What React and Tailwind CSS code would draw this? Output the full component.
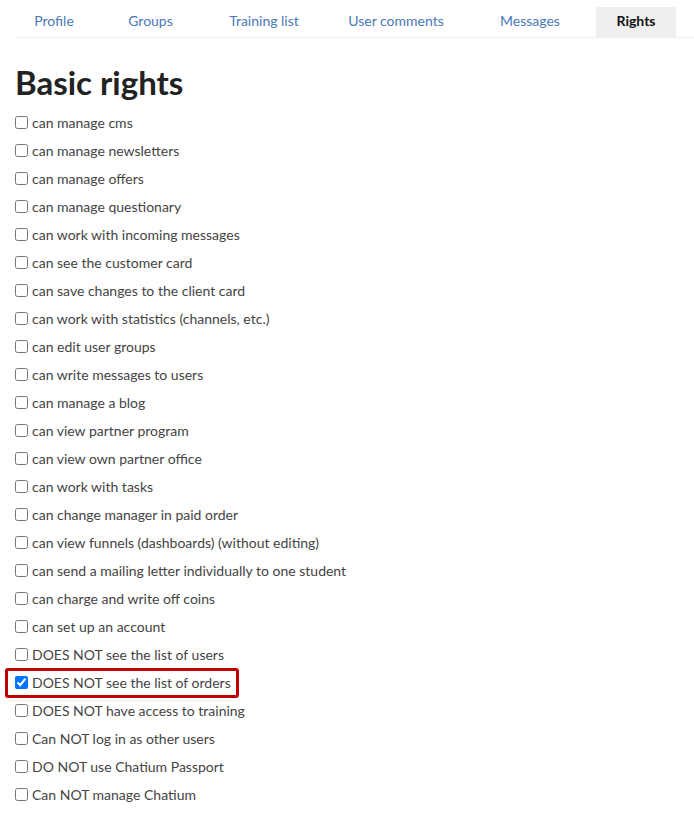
import { useState } from "react";

const tabs = ["Profile", "Groups", "Training list", "User comments", "Messages", "Rights"];

const rights = [
  "can manage cms",
  "can manage newsletters",
  "can manage offers",
  "can manage questionary",
  "can work with incoming messages",
  "can see the customer card",
  "can save changes to the client card",
  "can work with statistics (channels, etc.)",
  "can edit user groups",
  "can write messages to users",
  "can manage a blog",
  "can view partner program",
  "can view own partner office",
  "can work with tasks",
  "can change manager in paid order",
  "can view funnels (dashboards) (without editing)",
  "can send a mailing letter individually to one student",
  "can charge and write off coins",
  "can set up an account",
  "DOES NOT see the list of users",
  "DOES NOT see the list of orders",
  "DOES NOT have access to training",
  "Can NOT log in as other users",
  "DO NOT use Chatium Passport",
  "Can NOT manage Chatium",
];

export default function App() {
  const [checked, setChecked] = useState({ 20: true });

  return (
    <div className="min-h-[814px] bg-white pl-[15px] pt-[7px] font-['Lato',sans-serif] text-[#333]">
      <div className="flex border-b border-[#eeeeee] text-[14px]">
        {tabs.map((t, i) => (
          <div
            key={t}
            className={
              t === "Rights"
                ? "ml-[8px] flex h-[30px] w-[80px] items-center justify-center bg-[#efefef] pb-[3px] font-bold text-[#111]"
                : "flex h-[30px] items-center justify-center pb-[3px] text-[#4b79b8] " +
                  ["w-[78px]", "w-[115px]", "w-[112px]", "w-[152px]", "w-[116px]"][i]
            }
          >
            {t}
          </div>
        ))}
      </div>

      <h1 className="mt-[24px] mb-[6px] text-[33px] leading-[40px] font-bold text-[#222]">Basic rights</h1>

      <div className="flex flex-col">
        {rights.map((r, i) => (
          <div key={r} className="relative flex h-[28px] items-center">
            <label className="flex items-center text-[14px] text-[#444]">
              <input
                type="checkbox"
                className="mr-[4px] h-[13px] w-[13px]"
                checked={!!checked[i]}
                onChange={() => setChecked({ ...checked, [i]: !checked[i] })}
              />
              {r}
            </label>
            {i === 20 && (
              <div className="pointer-events-none absolute top-[0px] left-[-10px] h-[30px] w-[234px] rounded-[3px] border-[3px] border-[#c00000]" />
            )}
          </div>
        ))}
      </div>
    </div>
  );
}
